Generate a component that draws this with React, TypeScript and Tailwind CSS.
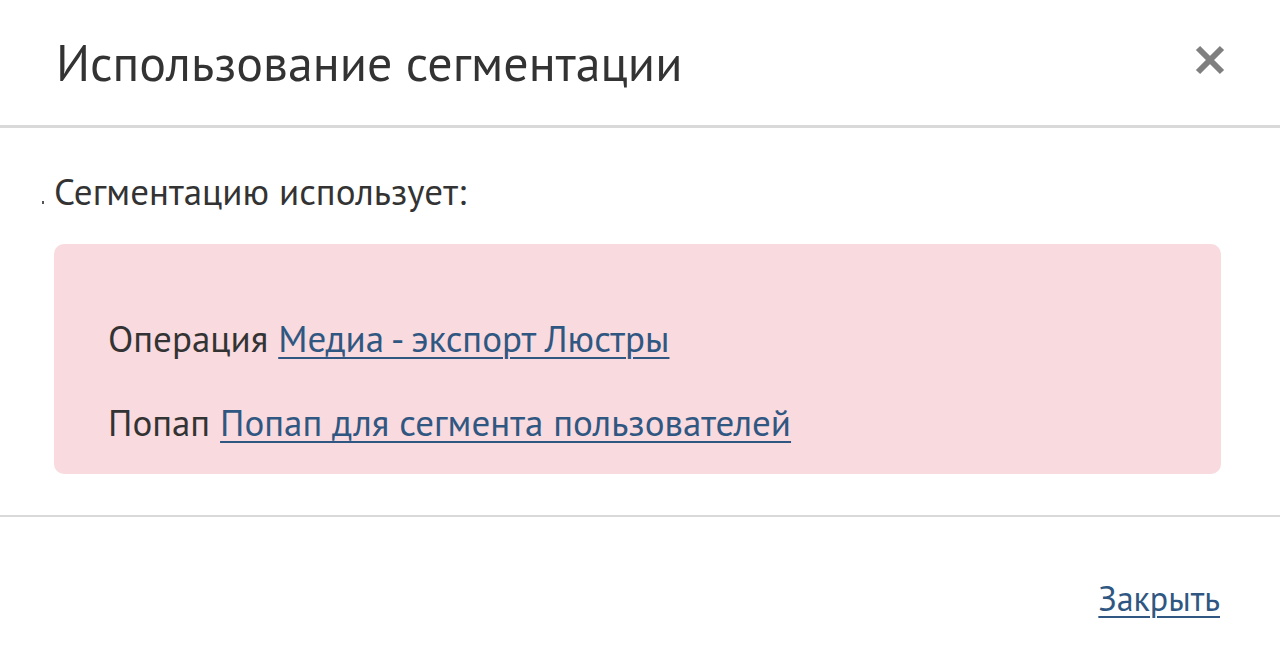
import { useState } from "react";

const font = { fontFamily: '"PT Sans", "Open Sans", Arial, sans-serif' };

export default function App() {
  const [open, setOpen] = useState(true);

  if (!open) return <div className="h-[660px] bg-white" />;

  return (
    <div className="w-[1280px] h-[660px] bg-white text-[#333333] flex flex-col" style={font}>
      {/* Header */}
      <header className="h-[128px] shrink-0 flex items-center justify-between pl-[56px] pr-[55px] border-b-[3px] border-[#d9d9d9]">
        <h1 className="text-[50px] leading-[50px] font-normal">Использование сегментации</h1>
        <button onClick={() => setOpen(false)} className="text-[#7f7f7f] pb-[5px]" aria-label="close">
          <svg width="30" height="30" viewBox="0 0 30 30">
            <path d="M3 3 L27 27 M27 3 L3 27" stroke="currentColor" strokeWidth="6" />
          </svg>
        </button>
      </header>

      {/* Body */}
      <div className="shrink-0 pl-[54px] pr-[59px] pt-[41px] pb-[41px] border-b-2 border-[#d9d9d9]">
        <p className="relative text-[37px] leading-[44px]">
          <span className="absolute -left-[12px] top-[32px] w-[2px] h-[3px] bg-[#555]" />
          Сегментацию использует:
        </p>
        <div className="mt-[31px] h-[230px] rounded-[10px] bg-[#f8dadf] pl-[54px] pt-[72px] text-[37px] leading-[44px] flex flex-col gap-[40px]">
          <p>
            Операция{" "}
            <a href="#" className="text-[#2f5781] underline underline-offset-[5px] decoration-2">
              Медиа - экспорт Люстры
            </a>
          </p>
          <p>
            Попап{" "}
            <a href="#" className="text-[#2f5781] underline underline-offset-[5px] decoration-2">
              Попап для сегмента пользователей
            </a>
          </p>
        </div>
      </div>

      {/* Footer */}
      <footer className="flex-1 flex justify-end items-start pr-[60px] pt-[61px]">
        <a
          href="#"
          onClick={(e) => {
            e.preventDefault();
            setOpen(false);
          }}
          className="text-[34px] leading-[40px] text-[#2f5781] underline underline-offset-[5px] decoration-2"
        >
          Закрыть
        </a>
      </footer>
    </div>
  );
}
